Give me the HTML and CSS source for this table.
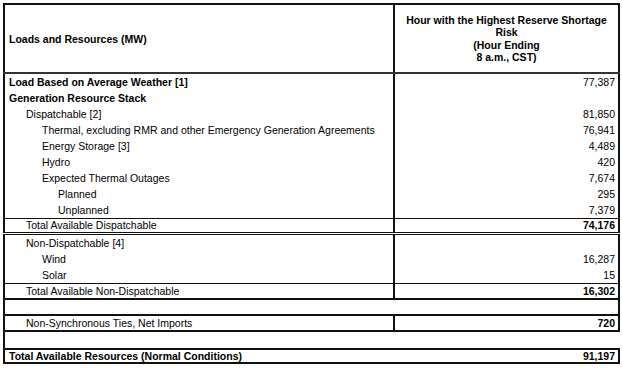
FILE: index.html
```html
<!DOCTYPE html>
<html lang="en">
<head>
    <meta charset="UTF-8">
    <meta name="viewport" content="width=device-width, initial-scale=1.0">
    <title>Loads and Resources</title>
    <link rel="stylesheet" href="styles.css">
</head>
<body>
    <table class="resources">
        <thead>
            <tr>
                <th class="label-head">Loads and Resources (MW)</th>
                <th class="value-head">Hour with the Highest Reserve Shortage Risk<br>(Hour Ending<br>8 a.m., CST)</th>
            </tr>
        </thead>
        <tbody>
            <tr>
                <td class="bold">Load Based on Average Weather [1]</td>
                <td class="num">77,387</td>
            </tr>
            <tr>
                <td class="bold">Generation Resource Stack</td>
                <td class="num"></td>
            </tr>
            <tr>
                <td class="l1">Dispatchable [2]</td>
                <td class="num">81,850</td>
            </tr>
            <tr>
                <td class="l2">Thermal, excluding RMR and other Emergency Generation Agreements</td>
                <td class="num">76,941</td>
            </tr>
            <tr>
                <td class="l2">Energy Storage [3]</td>
                <td class="num">4,489</td>
            </tr>
            <tr>
                <td class="l2">Hydro</td>
                <td class="num">420</td>
            </tr>
            <tr>
                <td class="l2">Expected Thermal Outages</td>
                <td class="num">7,674</td>
            </tr>
            <tr>
                <td class="l3">Planned</td>
                <td class="num">295</td>
            </tr>
            <tr class="line-below">
                <td class="l3">Unplanned</td>
                <td class="num">7,379</td>
            </tr>
            <tr class="total double-below">
                <td class="l1">Total Available Dispatchable</td>
                <td class="num">74,176</td>
            </tr>
            <tr>
                <td class="l1">Non-Dispatchable [4]</td>
                <td class="num"></td>
            </tr>
            <tr>
                <td class="l2">Wind</td>
                <td class="num">16,287</td>
            </tr>
            <tr class="line-below">
                <td class="l2">Solar</td>
                <td class="num">15</td>
            </tr>
            <tr class="total thick-below">
                <td class="l1">Total Available Non-Dispatchable</td>
                <td class="num">16,302</td>
            </tr>
            <tr class="blank thick-below">
                <td colspan="2"></td>
            </tr>
            <tr class="total thick-below">
                <td class="l1">Non-Synchronous Ties, Net Imports</td>
                <td class="num">720</td>
            </tr>
            <tr class="gap">
                <td colspan="2"></td>
            </tr>
            <tr class="grand">
                <td>Total Available Resources (Normal Conditions)</td>
                <td class="num">91,197</td>
            </tr>
        </tbody>
    </table>
</body>
</html>
```

FILE: styles.css
```css
body {
    margin: 0;
    padding: 3px;
    font-family: 'Liberation Sans', Arial, sans-serif;
    font-size: 10.5px;
    color: #000;
    background: #fff;
}
.resources {
    border-collapse: collapse;
    width: 617px;
    table-layout: fixed;
}
.resources th,
.resources td {
    padding: 0 4px;
    height: 16px;
    line-height: 16px;
    border-left: 2px solid #111;
    border-right: 2px solid #111;
    white-space: nowrap;
}
.resources td + td,
.resources th + th {
    border-left: 1px solid #111;
}
.resources th {
    border-top: 2px solid #111;
    border-bottom: 2px solid #333;
    height: 67px;
    white-space: normal;
}
.label-head {
    width: 380px;
    text-align: left;
}
.value-head {
    text-align: center;
    line-height: 12.5px !important;
    padding: 0 8px !important;
}
.bold {
    font-weight: bold;
}
.num {
    text-align: right;
    padding-right: 3px !important;
}
.l1 {
    padding-left: 21px !important;
}
.l2 {
    padding-left: 37px !important;
}
.l3 {
    padding-left: 53px !important;
}
.total .num {
    font-weight: bold;
}
.line-below td {
    border-bottom: 1px solid #111;
}
.double-below td {
    border-bottom: 3px double #111;
    height: 13px;
    line-height: 13px;
}
.thick-below td {
    border-bottom: 2px solid #111;
    height: 14px;
    line-height: 14px;
}
.gap td {
    border-right: none;
    border-left: 2px solid #111;
    height: 16px;
}
.grand td {
    font-weight: bold;
    border-top: 2px solid #111;
    border-bottom: 2px solid #111;
    height: 12px;
    line-height: 12px;
}
.grand td:first-child {
    border-right: none;
}
.grand td + td {
    border-left: none;
}
```
